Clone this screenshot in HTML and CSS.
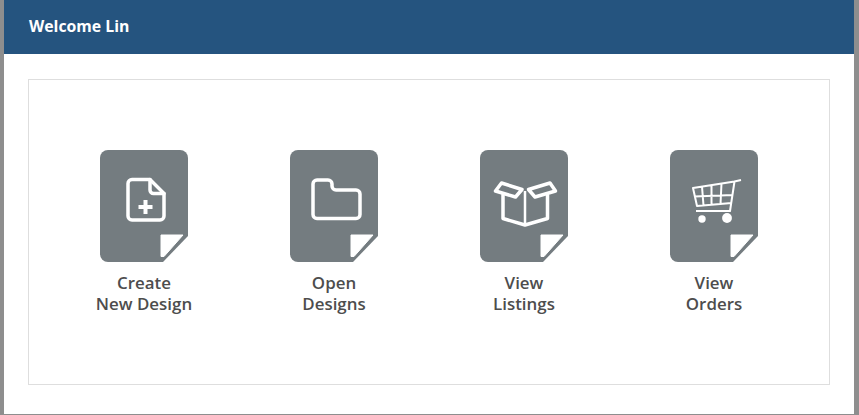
FILE: index.html
```html
<!DOCTYPE html>
<html lang="en">
<head>
<meta charset="utf-8">
<title>Welcome Lin</title>
<link rel="stylesheet" href="styles.css">
</head>
<body>
<main class="modal">
  <header class="modal-header">Welcome Lin</header>
  <div class="modal-body">
    <section class="actions">
      <a class="action">
        <svg class="tile" viewBox="0 0 88 112" width="88" height="112">
          <path class="sheet" d="M8 0H80a8 8 0 0 1 8 8V86L63 112H8a8 8 0 0 1-8-8V8a8 8 0 0 1 8-8Z"/>
          <path class="fold" d="M61 85H83L64 106.500H61Z"/>
          <path class="line" d="M32 29.500H50L64 43.500V66a4 4 0 0 1-4 4H32a4 4 0 0 1-4-4V33.500a4 4 0 0 1 4-4Z"/>
          <path class="line" d="M50 29.500V40a3.500 3.500 0 0 0 3.500 3.500H64"/>
          <path class="plus" d="M45.500 50V64M38.500 57H52.500"/>
        </svg>
        <span class="label">Create<br>New Design</span>
      </a>
      <a class="action">
        <svg class="tile" viewBox="0 0 88 112" width="88" height="112">
          <path class="sheet" d="M8 0H80a8 8 0 0 1 8 8V86L63 112H8a8 8 0 0 1-8-8V8a8 8 0 0 1 8-8Z"/>
          <path class="fold" d="M61 85H83L64 106.500H61Z"/>
          <path class="line" d="M27 30H38a4 4 0 0 1 4 4V36a4 4 0 0 0 4 4H66a4 4 0 0 1 4 4V64.500a4 4 0 0 1-4 4H27a4 4 0 0 1-4-4V34a4 4 0 0 1 4-4Z"/>
        </svg>
        <span class="label">Open<br>Designs</span>
      </a>
      <a class="action">
        <svg class="tile" viewBox="0 0 88 112" width="88" height="112">
          <path class="sheet" d="M8 0H80a8 8 0 0 1 8 8V86L63 112H8a8 8 0 0 1-8-8V8a8 8 0 0 1 8-8Z"/>
          <path class="fold" d="M61 85H83L64 106.500H61Z"/>
          <path class="line" d="M21.500 33L42 39.500L35.500 47L15.500 41Z"/>
          <path class="line" d="M70 33L48.500 39.500L55 47L75.500 41Z"/>
          <path class="line" d="M23 45V68.500L45 75L67.500 68.500V45"/>
          <path class="mid" d="M45 41V75"/>
        </svg>
        <span class="label">View<br>Listings</span>
      </a>
      <a class="action">
        <svg class="tile" viewBox="0 0 88 112" width="88" height="112">
          <path class="sheet" d="M8 0H80a8 8 0 0 1 8 8V86L63 112H8a8 8 0 0 1-8-8V8a8 8 0 0 1 8-8Z"/>
          <path class="fold" d="M61 85H83L64 106.500H61Z"/>
          <path class="cart" d="M71 30L64.500 31.500L60 61H26M64.500 31.500L23 38L27 56L61.500 53M24.500 46.500L63 45M32 36.500L33.500 55.500M41.500 35V54.500M51.500 33.500L50.500 54"/>
          <circle class="wheel" cx="32" cy="69" r="3.700"/>
          <circle class="wheel" cx="57" cy="68" r="4.900"/>
        </svg>
        <span class="label">View<br>Orders</span>
      </a>
    </section>
  </div>
</main>
</body>
</html>
```
FILE: styles.css
```css
* { box-sizing: border-box; }
html, body { height: 100%; }
body {
  margin: 0;
  background: #8e8e8e;
  font-family: "Open Sans", "Liberation Sans", sans-serif;
  overflow: hidden;
}
.modal {
  width: 850px;
  height: 414px;
  margin-left: 4px;
  background: #fff;
}
.modal-header {
  height: 54px;
  padding: 0 25px;
  background: #25547f;
  color: #fff;
  font-size: 15.800px;
  font-weight: 700;
  line-height: 52px;
}
.modal-body { padding: 25px 24px 0; }
.actions {
  display: grid;
  grid-template-columns: repeat(4, 190px);
  height: 306px;
  padding: 70px 20px 0;
  border: 1px solid #dedede;
}
.action {
  display: flex;
  flex-direction: column;
  align-items: center;
  color: #4d4d4d;
}
.tile { display: block; }
.sheet { fill: #747c80; }
.fold { fill: #fff; stroke: #fff; stroke-width: 1; stroke-linejoin: round; }
.line, .plus, .mid, .cart { fill: none; stroke: #fff; stroke-linejoin: round; }
.line { stroke-width: 3.500; stroke-linecap: round; }
.plus { stroke-width: 4; }
.mid { stroke-width: 2.500; }
.cart { stroke-width: 2; }
.wheel { fill: #fff; }
.label {
  margin-top: 10px;
  font-size: 16.900px;
  font-weight: 600;
  line-height: 21px;
  text-align: center;
}
```
